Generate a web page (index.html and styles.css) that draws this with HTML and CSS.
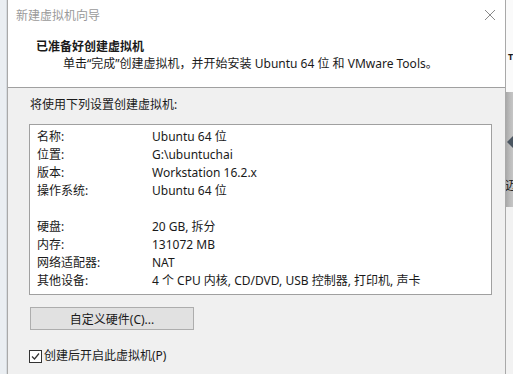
FILE: index.html
```html
<!DOCTYPE html>
<html lang="zh-CN">

<head>
	<meta charset="UTF-8">
	<title>新建虚拟机向导</title>
	<link rel="stylesheet" href="styles.css">
</head>

<body>
	<div class="backdrop-left"></div>

	<div class="dialog">
		<div class="header">
			<div class="titlebar">
				<span class="title">新建虚拟机向导</span>
				<svg class="close" width="12" height="12" viewBox="0 0 12 12">
					<path d="M1 1 L11 11 M11 1 L1 11" stroke="#8a8a8a" stroke-width="1" fill="none"/>
				</svg>
			</div>
			<div class="heading">已准备好创建虚拟机</div>
			<div class="subheading">单击“完成”创建虚拟机，并开始安装 Ubuntu 64 位 和 VMware Tools。</div>
		</div>

		<div class="content">
			<div class="intro">将使用下列设置创建虚拟机:</div>

			<div class="summary">
				<div class="row"><span class="key">名称:</span><span>Ubuntu 64 位</span></div>
				<div class="row"><span class="key">位置:</span><span>G:\ubuntuchai</span></div>
				<div class="row"><span class="key">版本:</span><span>Workstation 16.2.x</span></div>
				<div class="row"><span class="key">操作系统:</span><span>Ubuntu 64 位</span></div>
				<div class="row"></div>
				<div class="row"><span class="key">硬盘:</span><span>20 GB, 拆分</span></div>
				<div class="row"><span class="key">内存:</span><span>131072 MB</span></div>
				<div class="row"><span class="key">网络适配器:</span><span>NAT</span></div>
				<div class="row"><span class="key">其他设备:</span><span>4 个 CPU 内核, CD/DVD, USB 控制器, 打印机, 声卡</span></div>
			</div>

			<button class="hw-button">自定义硬件(C)...</button>

			<label class="check">
				<span class="box">
					<svg width="11" height="11" viewBox="0 0 11 11">
						<path d="M2 5.5 L4.5 8 L9 2.5" stroke="#333" stroke-width="1.2" fill="none"/>
					</svg>
				</span>
				创建后开启此虚拟机(P)
			</label>
		</div>
	</div>

	<div class="backdrop-right">
		<div class="bd-top"><span class="bd-char">T</span></div>
		<div class="bd-bar">
			<span class="bd-arrow"></span>
			<span class="bd-text">迈</span>
		</div>
		<div class="bd-bottom"></div>
	</div>
</body>

</html>
```

FILE: styles.css
```css
body {
	font-family: "Noto Sans", "Noto Sans CJK SC", sans-serif;
	font-size: 12px;
	color: #1a1a1a;
	margin: 0;
	padding: 0;
	width: 513px;
	height: 374px;
	overflow: hidden;
	display: flex;
	background-color: #f0f0f0;
}

.backdrop-left {
	width: 7px;
	background-color: #eaeef2;
	border-right: 1px solid #d6dbe0;
	box-sizing: border-box;
}

.dialog {
	width: 499px;
	border-left: 1px solid #a9a9a9;
	border-right: 1px solid #a9a9a9;
	box-sizing: border-box;
	background-color: #f0f0f0;
	display: flex;
	flex-direction: column;
}

.header {
	height: 88px;
	background-color: #fff;
	border-bottom: 1px solid #a0a0a0;
	box-sizing: border-box;
}

.titlebar {
	height: 30px;
	display: flex;
	align-items: center;
	justify-content: space-between;
	padding: 0 9px 0 8px;
}

.title {
	color: #9a9a9a;
	font-size: 12px;
}

.heading {
	padding-left: 28px;
	margin-top: 8px;
	font-weight: bold;
	line-height: 17px;
}

.subheading {
	padding-left: 55px;
	line-height: 17px;
}

.content {
	padding: 8px 12px 0 21px;
}

.intro {
	padding-left: 1px;
	line-height: 18px;
}

.summary {
	margin-top: 10px;
	height: 171px;
	width: 463px;
	box-sizing: border-box;
	background-color: #fff;
	border: 1px solid #a0a0a0;
	padding: 3px 0 0 7px;
}

.row {
	display: flex;
	height: 18px;
	line-height: 18px;
	white-space: nowrap;
}

.key {
	width: 115px;
	flex-shrink: 0;
}

.hw-button {
	display: block;
	margin: 12px 0 0 1px;
	width: 164px;
	height: 23px;
	background-color: #e1e1e1;
	border: 1px solid #adadad;
	font-family: inherit;
	font-size: 12px;
	color: #1a1a1a;
	padding: 0;
}

.check {
	display: flex;
	align-items: center;
	gap: 2px;
	margin-top: 19px;
	line-height: 14px;
}

.box {
	width: 13px;
	height: 13px;
	box-sizing: border-box;
	border: 1px solid #333;
	background-color: #fff;
	display: flex;
	align-items: center;
	justify-content: center;
}

.backdrop-right {
	flex: 1;
	display: flex;
	flex-direction: column;
	overflow: hidden;
}

.bd-top {
	height: 92px;
	background-color: #fafafa;
	position: relative;
}

.bd-char {
	position: absolute;
	left: 2px;
	top: 50px;
	font-size: 9px;
	font-weight: bold;
}

.bd-bar {
	height: 115px;
	background: linear-gradient(to right, #a9a9a9 0, #bcbcbc 4px, #c9c9c9 8px);
	position: relative;
}

.bd-arrow {
	position: absolute;
	left: 1px;
	top: 44px;
	width: 0;
	height: 0;
	border-top: 6px solid transparent;
	border-bottom: 6px solid transparent;
	border-right: 6px solid #4a5560;
}

.bd-text {
	position: absolute;
	left: -1px;
	top: 84px;
	font-size: 12px;
}

.bd-bottom {
	flex: 1;
	background-color: #f2f2f2;
}
```
